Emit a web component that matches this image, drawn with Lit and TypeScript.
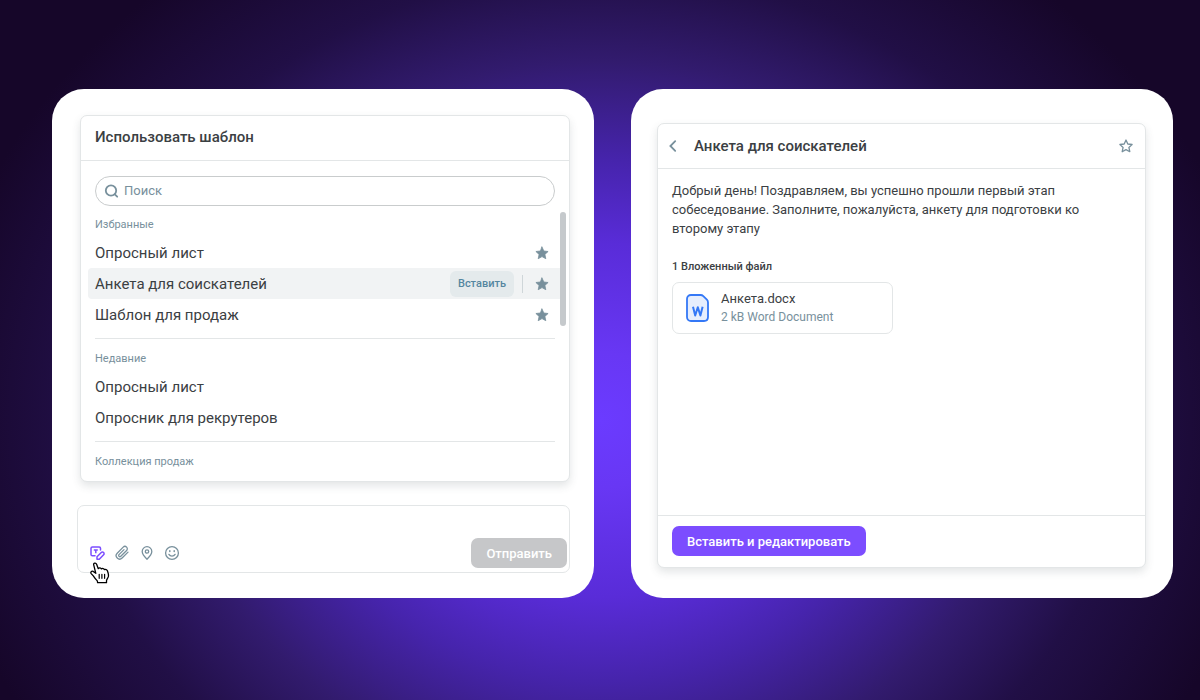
import { LitElement, html, css, svg, nothing } from "lit";
import { customElement, property } from "lit/decorators.js";

const STAR =
  "M8 2l1.800 4 4.300.5-3.200 2.900.9 4.300L8 11.600l-3.800 2.100.9-4.300L1.900 6.500l4.300-.5z";

const shapes = {
  search: svg`<circle cx="7" cy="7.500" r="5.200"/><path d="M10.800 11.300l2.400 2.400"/>`,
  back: svg`<path d="M10.200 3.200L5.400 8l4.800 4.800"/>`,
  star: svg`<path d=${STAR} stroke-linejoin="round"/>`,
  template: svg`<g stroke-width="1.500"><path d="M6 10.700H3.400C2.600 10.700 2 10.200 2 9.400V3.300C2 2.500 2.600 2 3.400 2h6.800c.8 0 1.300.5 1.300 1.300v1.700"/><path d="M4.800 4.900h4M6.800 4.900v3.400" stroke-linecap="butt"/><path d="M8 14.300v-2.500l4.300-4.300a1.600 1.600 0 0 1 2.300 2.300l-4.300 4.500z" stroke-linejoin="round"/></g>`,
  clip: svg`<path d="M14 7.100l-5.900 5.900a3.400 3.400 0 0 1-4.900-4.800l6-6.100a2.400 2.400 0 0 1 3.400 3.400l-5.800 5.800a1.200 1.200 0 0 1-1.800-1.700l5-5"/>`,
  pin: svg`<path d="M8 14.200C5.600 11.900 3.200 9.500 3.200 6.500a4.800 4.800 0 0 1 9.600 0C12.800 9.500 10.400 11.900 8 14.200z"/><circle cx="8" cy="6.500" r="1.700"/>`,
  smile: svg`<circle cx="8" cy="8" r="6.400"/><path d="M4.900 9.400c.7 1.200 1.800 1.800 3.100 1.800s2.400-.6 3.100-1.800"/><path d="M5.800 5.700v.7M10.200 5.700v.7" stroke-width="1.500"/>`,
};

type ShapeName = keyof typeof shapes;

const icon = (name: ShapeName, extra = "") => html`
  <svg class="icon ${extra}" viewBox="0 0 16 16" aria-hidden="true">${shapes[name]}</svg>
`;

const shared = css`
  :host {
    --ink: #3b4043;
    --muted: #78909c;
    --line: #e3e6e7;
    --accent: #7c4dff;
    display: block;
    font-family: Roboto, "Liberation Sans", sans-serif;
    color: var(--ink);
  }
  * {
    box-sizing: border-box;
  }
  button,
  input,
  textarea {
    font: inherit;
    color: inherit;
    background: none;
    border: 0;
    margin: 0;
    padding: 0;
  }
  h2,
  h3,
  p,
  ul {
    margin: 0;
    padding: 0;
    font-weight: 400;
  }
  ul {
    list-style: none;
  }
  .icon {
    display: block;
    width: 16px;
    height: 16px;
    fill: none;
    stroke: currentColor;
    stroke-width: 1.3;
    stroke-linecap: round;
  }
  .bold {
    stroke-width: 1.8;
  }
  .filled {
    fill: currentColor;
    stroke-width: 0.8;
  }
  .panel {
    display: flex;
    flex-direction: column;
    background: #fff;
    border: 1px solid var(--line);
    border-radius: 7px;
    box-shadow: 0 4px 9px rgba(55, 71, 79, 0.14);
  }
  .title {
    font-size: 15px;
    line-height: 20px;
    font-weight: 500;
  }
  .action {
    height: 30px;
    padding: 0 15px;
    border-radius: 7px;
    color: #fff;
    font-size: 13px;
    font-weight: 500;
  }
`;

interface Item {
  name: string;
  favorite?: boolean;
  active?: boolean;
}

const groups: { label: string; items: Item[] }[] = [
  {
    label: "Избранные",
    items: [
      { name: "Опросный лист", favorite: true },
      { name: "Анкета для соискателей", favorite: true, active: true },
      { name: "Шаблон для продаж", favorite: true },
    ],
  },
  {
    label: "Недавние",
    items: [{ name: "Опросный лист" }, { name: "Опросник для рекрутеров" }],
  },
  { label: "Коллекция продаж", items: [] },
];

@customElement("template-picker")
export class TemplatePicker extends LitElement {
  static styles = [
    shared,
    css`
      .head {
        padding: 11px 14px 13px;
        border-bottom: 1px solid var(--line);
      }
      .search {
        display: flex;
        align-items: center;
        gap: 4px;
        height: 30px;
        margin: 15px 14px 6px;
        padding: 0 8px;
        border: 1px solid #c9cccd;
        border-radius: 15px;
        color: var(--muted);
      }
      .query {
        flex: 1;
        min-width: 0;
        outline: 0;
        font-size: 13px;
        line-height: 20px;
      }
      .query::placeholder {
        color: var(--muted);
        opacity: 1;
      }
      .body {
        display: flex;
        align-items: flex-start;
        padding: 0 3px 7px 0;
      }
      .list {
        flex: 1;
        min-width: 0;
        padding-left: 7px;
      }
      .thumb {
        width: 6px;
        height: 114px;
        border-radius: 3px;
        background: #c5c9cc;
      }
      .group + .group::before {
        content: "";
        display: block;
        height: 1px;
        margin: 8px 5px 9px 7px;
        background: var(--line);
      }
      .label {
        padding: 4px 7px 5px;
        font-size: 11px;
        line-height: 14px;
        color: var(--muted);
      }
      .group:first-child .label {
        padding-top: 6px;
      }
      .row {
        display: flex;
        align-items: center;
        height: 31px;
        padding: 0 10px 0 7px;
        border-radius: 4px 0 0 4px;
        font-size: 15px;
      }
      .row.active {
        background: #f1f3f4;
      }
      .name {
        flex: 1;
        text-align: left;
      }
      .insert {
        height: 26px;
        padding: 0 8px;
        border-radius: 6px;
        background: #e4eaec;
        color: #5486a0;
        font-size: 11px;
        font-weight: 500;
      }
      .rule {
        width: 1px;
        height: 18px;
        margin: 0 11px 0 8px;
        background: #cfd6d9;
      }
      .fav {
        color: var(--muted);
      }
    `,
  ];

  render() {
    return html`
      <section class="panel">
        <header class="head"><h2 class="title">Использовать шаблон</h2></header>
        <label class="search">
          ${icon("search", "bold")}
          <input class="query" type="text" placeholder="Поиск" aria-label="Поиск" />
        </label>
        <div class="body">
          <div class="list">
            ${groups.map(
              (g) => html`
                <div class="group">
                  <h3 class="label">${g.label}</h3>
                  <ul>
                    ${g.items.map((i) => this.row(i))}
                  </ul>
                </div>
              `,
            )}
          </div>
          <div class="thumb"></div>
        </div>
      </section>
    `;
  }

  private row(item: Item) {
    return html`
      <li class="row ${item.active ? "active" : ""}">
        <button class="name">${item.name}</button>
        ${item.active
          ? html`<button class="insert">Вставить</button><span class="rule"></span>`
          : nothing}
        ${item.favorite
          ? html`<button class="fav" aria-label="Убрать из избранного">${icon("star", "filled")}</button>`
          : nothing}
      </li>
    `;
  }
}

@customElement("message-composer")
export class MessageComposer extends LitElement {
  static styles = [
    shared,
    css`
      .box {
        border: 1px solid var(--line);
        border-radius: 7px;
        padding: 0 2px 4px 11px;
      }
      .text {
        display: block;
        width: 100%;
        height: 32px;
        resize: none;
        outline: 0;
      }
      .bar {
        display: flex;
        align-items: center;
        gap: 9px;
        color: var(--muted);
      }
      .tool {
        position: relative;
      }
      .tool.on {
        color: var(--accent);
      }
      .pointer {
        position: absolute;
        left: 1px;
        top: 17px;
        width: 21px;
        height: 22px;
      }
      .send {
        margin-left: auto;
        background: #c6c7c9;
      }
    `,
  ];

  render() {
    return html`
      <div class="box">
        <textarea class="text" aria-label="Сообщение"></textarea>
        <div class="bar">
          <button class="tool on" aria-label="Шаблоны">
            ${icon("template")}
            <svg class="pointer" viewBox="0 0 21 22" aria-hidden="true">
              <path
                d="M3.700 2.900C3.200.9 5.900.4 6.600 2.200l1.700 4.500c.8-1.100 2.600-.9 3.100.2 1-.8 2.600-.4 3 .7 1.200-.6 2.600 0 3 1.200.6 1.800 1.400 3.600 1 5.600-.4 1.700-1.600 2.800-1.900 4.200v2.100H7.600l-.3-1.800C5.700 17.300 4.300 15.500 3.300 13.900L1.200 11.600C.2 10.100 1.600 8.600 3.200 9.400l2.600 1.900z"
                fill="#fff"
                stroke="#000"
                stroke-width="1.300"
                stroke-linejoin="round"
              />
              <path d="M9.200 12.300v4M11.900 12.300v4M14.600 12.300v4" fill="none" stroke="#000" stroke-width="1.200" stroke-linecap="round" />
            </svg>
          </button>
          <button class="tool" aria-label="Прикрепить файл">${icon("clip")}</button>
          <button class="tool" aria-label="Местоположение">${icon("pin")}</button>
          <button class="tool" aria-label="Эмодзи">${icon("smile")}</button>
          <button class="action send">Отправить</button>
        </div>
      </div>
    `;
  }
}

@customElement("template-preview")
export class TemplatePreview extends LitElement {
  @property() heading = "Анкета для соискателей";

  static styles = [
    shared,
    css`
      :host {
        display: flex;
      }
      .panel {
        flex: 1;
      }
      .head {
        display: flex;
        align-items: center;
        gap: 13px;
        padding: 12px 11px 12px 7px;
        border-bottom: 1px solid var(--line);
      }
      .nav {
        color: var(--muted);
      }
      .title {
        flex: 1;
      }
      .content {
        flex: 1;
        padding: 12px 14px;
      }
      .copy {
        font-size: 13px;
        line-height: 19px;
      }
      .count {
        margin: 21px 0 7px;
        font-size: 11px;
        line-height: 16px;
        font-weight: 500;
      }
      .file {
        display: flex;
        align-items: center;
        gap: 10px;
        width: 221px;
        padding: 7px 12px;
        border: 1px solid var(--line);
        border-radius: 7px;
        color: inherit;
        text-decoration: none;
      }
      .doc {
        width: 26px;
        height: 30px;
      }
      .file-name {
        font-size: 13px;
        line-height: 18px;
      }
      .meta {
        font-size: 12px;
        line-height: 18px;
        color: var(--muted);
      }
      .foot {
        padding: 10px 14px 11px;
        border-top: 1px solid var(--line);
      }
      .primary {
        display: block;
        background: var(--accent);
      }
    `,
  ];

  render() {
    return html`
      <section class="panel">
        <header class="head">
          <button class="nav" aria-label="Назад">${icon("back", "bold")}</button>
          <h2 class="title">${this.heading}</h2>
          <button class="nav" aria-label="В избранное">${icon("star")}</button>
        </header>
        <div class="content">
          <p class="copy">
            Добрый день! Поздравляем, вы успешно прошли первый этап собеседование.
            Заполните, пожалуйста, анкету для подготовки ко второму этапу
          </p>
          <h3 class="count">1 Вложенный файл</h3>
          <a class="file" href="#">
            <svg class="doc" viewBox="0 0 26 30" aria-hidden="true">
              <path
                d="M6 2h9.500c1.200 0 2 .3 2.800 1.100l3.600 3.600C22.700 7.500 23 8.300 23 9.400V24c0 2.400-1.500 4-4 4H6c-2.400 0-4-1.600-4-4V6c0-2.400 1.600-4 4-4z"
                fill="#e6eefd"
                stroke="#3478f6"
                stroke-width="1.800"
              />
              <path d="M8 13.800l2.200 8.700 2.600-8.200 2.600 8.200 2.200-8.700" fill="none" stroke="#3478f6" stroke-width="2" stroke-linejoin="round" />
            </svg>
            <div>
              <div class="file-name">Анкета.docx</div>
              <div class="meta">2 kB Word Document</div>
            </div>
          </a>
        </div>
        <footer class="foot">
          <button class="action primary">Вставить и редактировать</button>
        </footer>
      </section>
    `;
  }
}

@customElement("app-root")
export class AppRoot extends LitElement {
  static styles = css`
    :host {
      display: block;
      box-sizing: border-box;
      min-height: 100vh;
      padding: 89px 27px 101px 52px;
      background: radial-gradient(
        ellipse 610px 520px at 50% 60%,
        #6b3bff 0%,
        #6837f4 13%,
        #592cd8 34%,
        #4624ac 50%,
        #321b6e 69%,
        #210f46 86%,
        #160629 110%
      );
    }
    .stage {
      display: grid;
      grid-template-columns: 1fr 1fr;
      gap: 37px;
    }
    .card {
      display: flex;
      flex-direction: column;
      background: #fff;
      border-radius: 32px;
    }
    .compose {
      gap: 23px;
      padding: 26px 24px 25px 25px;
    }
    .picker {
      margin-left: 3px;
    }
    .preview {
      padding: 34px 27px 30px 26px;
    }
    .fill {
      flex: 1;
    }
  `;

  render() {
    return html`
      <main class="stage">
        <div class="card compose">
          <template-picker class="picker"></template-picker>
          <message-composer></message-composer>
        </div>
        <div class="card preview">
          <template-preview class="fill"></template-preview>
        </div>
      </main>
    `;
  }
}
